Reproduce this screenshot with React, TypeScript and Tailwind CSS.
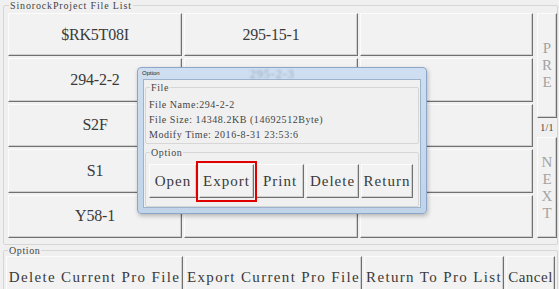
const GRID = ['$RK5T08I', '295-15-1', '', '294-2-2', '', '', 'S2F', '', '', 'S1', '', '', 'Y58-1', '', ''];

const raised =
  'bg-[#f2f2f2] border border-t-[#fcfcfc] border-l-[#fcfcfc] border-r-[#707070] border-b-[#707070] shadow-[inset_-1px_-1px_0_#cfcfcf]';

function Cell({ label }: { label: string }) {
  return (
    <div className={`flex items-center justify-center ${raised} text-[16px] tracking-[-0.2px] text-[#3a3a3a]`}>
      {label}
    </div>
  );
}

function SideButton({ letters, className = '' }: { letters: string[]; className?: string }) {
  return (
    <div className={`flex flex-col items-center justify-center ${raised} text-[15px] text-[#a4a4a4] ${className}`}>
      {letters.map((l) => (
        <span key={l} className="block leading-[17px]">{l}</span>
      ))}
    </div>
  );
}

function DialogButton({ label, w }: { label: string; w: string }) {
  return (
    <div className={`flex items-center justify-center h-[34px] ${w} ${raised} text-[15px] tracking-[1px] text-[#3a3a3a]`}>
      {label}
    </div>
  );
}

export default function App() {
  return (
    <div className="relative w-[559px] h-[289px] overflow-hidden bg-[#f0f0f0] [font-family:'Liberation_Serif','Times_New_Roman',serif] text-[#3a3a3a]">
      {/* File list group */}
      <fieldset className="ml-[3px] mr-[1px] border border-[#d6d6d6] rounded-[2px] pl-[4px] pb-[6px]">
        <legend className="ml-[1px] px-[1px] text-[10px] leading-[11px] tracking-[0.85px] text-[#444]">
          SinorockProject File List
        </legend>
        <div className="flex pt-[2px]">
          <div className="grid grid-cols-[174px_174px_173px] grid-rows-[repeat(5,minmax(0,1fr))] gap-[2px] h-[225px]">
            {GRID.map((label, i) => (
              <Cell key={i} label={label} />
            ))}
          </div>
          <div className="ml-[4px] w-[20px] h-[225px] flex flex-col">
            <SideButton letters={['P', 'R', 'E']} className="h-[105px]" />
            <div className="h-[19px] flex items-center justify-center text-[10px] tracking-[0.3px] text-[#444]">1/1</div>
            <SideButton letters={['N', 'E', 'X', 'T']} className="flex-1" />
          </div>
        </div>
      </fieldset>

      {/* Bottom options */}
      <fieldset className="ml-[3px] mr-[1px] border border-[#d6d6d6] rounded-[2px] pl-[2px]">
        <legend className="ml-[2px] px-[1px] text-[10px] leading-[11px] tracking-[0.6px] text-[#444]">Option</legend>
        <div className="flex gap-[2px] text-[15px] tracking-[1.35px] text-[#3a3a3a]">
          <div className={`w-[177px] h-[43px] flex items-center justify-center ${raised}`}>Delete Current Pro File</div>
          <div className={`w-[177px] h-[43px] flex items-center justify-center ${raised}`}>Export Current Pro File</div>
          <div className={`w-[140px] h-[43px] flex items-center justify-center ${raised}`}>Return To Pro List</div>
          <div className={`w-[49px] h-[43px] flex items-center justify-center tracking-[0.5px] ${raised}`}>Cancel</div>
        </div>
      </fieldset>

      {/* Option dialog */}
      <div className="absolute left-[137px] top-[67px] w-[290px] h-[147px] flex flex-col rounded-[4px] border border-[#8ba6c6] bg-gradient-to-b from-[#cfdff1] to-[#c0d4ea] px-[5px] pb-[5px] shadow-[1px_2px_4px_rgba(0,0,0,0.25)]">
        <div className="h-[11px] flex items-center">
          <span className="ml-[-1px] [font-family:'Liberation_Sans',sans-serif] text-[6px] text-[#222]">Option</span>
          <span className="ml-[90px] text-[12px] tracking-[1px] text-[#94a6bc] blur-[1.2px]">295-2-3</span>
        </div>
        <div className="flex-1 flex flex-col overflow-hidden bg-[#f0f0f0] border border-[#9db2cb]">
          <fieldset className="mx-[1px] mt-[2px] border border-[#d6d6d6] rounded-[2px] px-[3px] pb-[1px]">
            <legend className="ml-[1px] px-[1px] text-[10px] leading-[11px] tracking-[0.6px] text-[#444]">File</legend>
            <div className="pt-[4px] text-[10px] leading-[15px] tracking-[0.55px] text-[#444]">
              <div>File Name:294-2-2</div>
              <div>File Size: 14348.2KB (14692512Byte)</div>
              <div>Modify Time: 2016-8-31 23:53:6</div>
            </div>
          </fieldset>
          <fieldset className="mx-[1px] mt-[3px] border border-[#d6d6d6] rounded-[2px] pl-[3px] pt-[6px] pb-[8px]">
            <legend className="ml-[1px] px-[1px] text-[10px] leading-[11px] tracking-[0.6px] text-[#444]">Option</legend>
            <div className="flex gap-[2px]">
              <DialogButton label="Open" w="w-[48px]" />
              <div className="relative">
                <DialogButton label="Export" w="w-[55px]" />
                <div className="absolute -left-[3px] -right-[3px] -top-[3px] -bottom-[4px] border-2 border-[#e00000]" />
              </div>
              <DialogButton label="Print" w="w-[48px]" />
              <DialogButton label="Delete" w="w-[53px]" />
              <DialogButton label="Return" w="w-[52px]" />
            </div>
          </fieldset>
        </div>
      </div>
    </div>
  );
}
